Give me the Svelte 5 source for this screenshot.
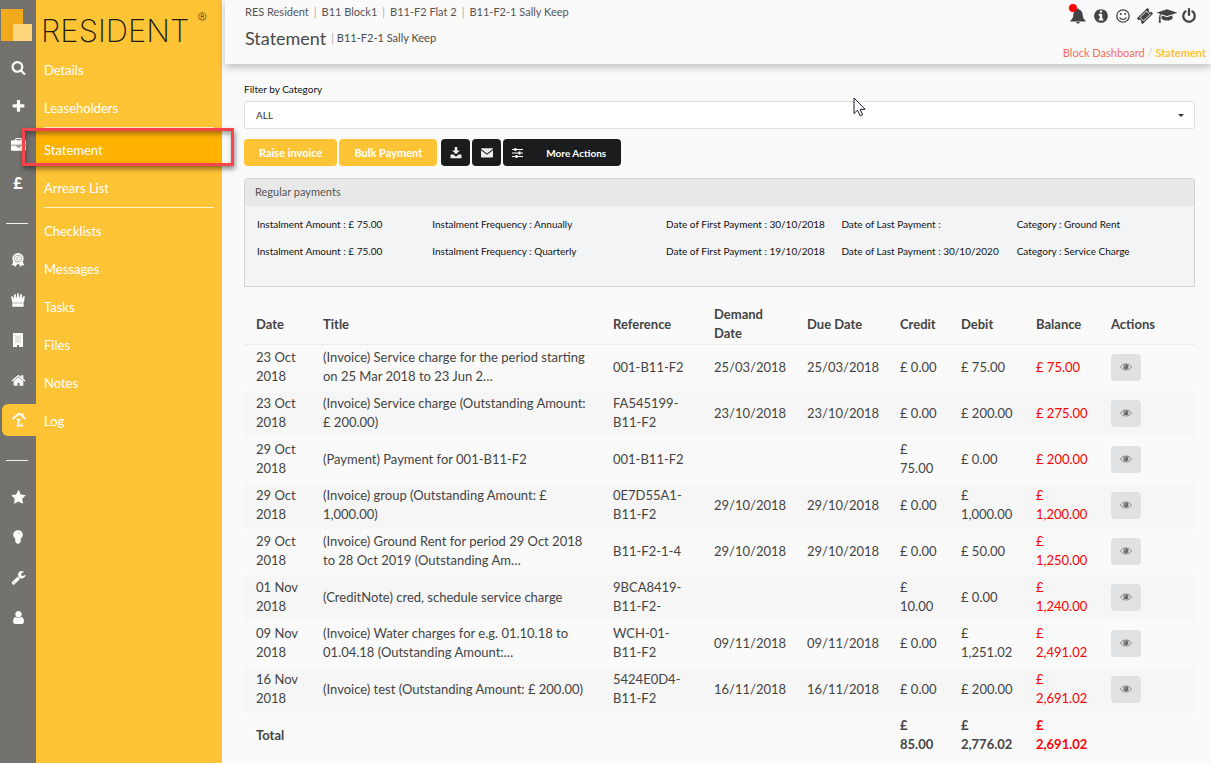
<script>
  const faSearch = 'M1216 832q0-185-131.5-316.5t-316.5-131.5-316.5 131.5-131.5 316.5 131.5 316.5 316.5 131.5 316.5-131.5 131.5-316.5zm512 832q0 52-38 90t-90 38q-54 0-90-38l-343-342q-179 124-399 124-143 0-273.5-55.5t-225-150-150-225-55.5-273.5 55.5-273.5 150-225 225-150 273.5-55.5 273.5 55.5 225 150 150 225 55.5 273.5q0 220-124 399l343 343q37 37 37 90z';
  const faPlus = 'M1600 736v192q0 40-28 68t-68 28h-416v416q0 40-28 68t-68 28h-192q-40 0-68-28t-28-68v-416h-416q-40 0-68-28t-28-68v-192q0-40 28-68t68-28h416v-416q0-40 28-68t68-28h192q40 0 68 28t28 68v416h416q40 0 68 28t28 68z';
  const faCase = 'M640 256h512v-128h-512v128zm1152 640v480q0 66-47 113t-113 47h-1472q-66 0-113-47t-47-113v-480h672v160q0 26 19 45t45 19h320q26 0 45-19t19-45v-160h672zm-768 0v128h-256v-128h256zm768-480v384h-1792v-384q0-66 47-113t113-47h352v-160q0-40 28-68t68-28h576q40 0 68 28t28 68v160h352q66 0 113 47t47 113z';
  const faHome = 'M1472 992v480q0 26-19 45t-45 19h-384v-384h-256v384h-384q-26 0-45-19t-19-45v-480q0-1 .5-3t.5-3l575-474 575 474q1 2 1 6zm223-69l-62 74q-8 9-21 11h-3q-13 0-21-7l-692-577-692 577q-12 8-24 7-13-2-21-11l-62-74q-8-10-7-23.5t11-21.5l719-599q32-26 76-26t76 26l244 204v-195q0-14 9-23t23-9h192q14 0 23 9t9 23v408l219 182q10 8 11 21.5t-7 23.5z';
  const faStar = 'M1728 647q0 22-26 48l-363 354 86 500q1 7 1 20 0 21-10.5 35.5t-30.5 14.5q-19 0-40-12l-449-236-449 236q-22 12-40 12-21 0-31.5-14.5t-10.5-35.5q0-6 2-20l86-500-364-354q-25-27-25-48 0-37 56-46l502-73 225-455q19-41 49-41t49 41l225 455 502 73q56 9 56 46z';
  const faWrench = 'M448 1472q0-26-19-45t-45-19-45 19-19 45 19 45 45 19 45-19 19-45zm644-420l-682 682q-37 37-90 37-52 0-91-37l-106-108q-38-36-38-90 0-53 38-91l681-681q39 98 114.5 173.5t173.5 114.5zm634-435q0 39-23 106-47 134-164.5 217.5t-258.5 83.5q-185 0-316.5-131.5t-131.5-316.5 131.5-316.5 316.5-131.5q58 0 121.5 16.5t107.5 46.5q16 11 16 28t-16 28l-293 169v224l193 107q5-3 79-48.5t135.5-81 70.5-35.5q15 0 23.5 10t8.5 25z';
  const faUser = 'M1536 1399q0 109-62.5 187t-150.5 78h-854q-88 0-150.5-78t-62.5-187q0-85 8.5-160.5t31.5-152 58.5-131 94-89 134.5-34.5q131 128 313 128t313-128q76 0 134.5 34.5t94 89 58.5 131 31.5 152 8.5 160.5zm-256-887q0 159-112.5 271.5t-271.5 112.5-271.5-112.5-112.5-271.5 112.5-271.5 271.5-112.5 271.5 112.5 112.5 271.5z';
  const faInfo = 'M1152 1376v-160q0-14-9-23t-23-9h-96v-512q0-14-9-23t-23-9h-320q-14 0-23 9t-9 23v160q0 14 9 23t23 9h96v320h-96q-14 0-23 9t-9 23v160q0 14 9 23t23 9h448q14 0 23-9t9-23zm-128-896v-160q0-14-9-23t-23-9h-192q-14 0-23 9t-9 23v160q0 14 9 23t23 9h192q14 0 23-9t9-23zm640 416q0 209-103 385.5t-279.5 279.5-385.5 103-385.5-103-279.5-279.5-103-385.5 103-385.5 279.5-279.5 385.5-103 385.5 103 279.5 279.5 103 385.5z';
  const faCap = 'M1774 836l18 316q4 69-82 128t-235 93.5-323 34.5-323-34.5-235-93.5-82-128l18-316 574 181q22 7 48 7t48-7zm530-324q0 23-22 31l-1120 352q-4 1-10 1t-10-1l-652-206q-43 34-71 111.5t-34 178.5q63 36 63 109 0 69-58 107l58 433q2 14-8 25-9 11-24 11h-192q-15 0-24-11-10-11-8-25l58-433q-58-38-58-107 0-73 65-111 11-207 98-330l-333-104q-22-8-22-31t22-31l1120-352q4-1 10-1t10 1l1120 352q22 8 22 31z';
  const faPower = 'M1664 896q0 156-61 298t-164 245-245 164-298 61-298-61-245-164-164-245-61-298q0-182 80.5-343t226.5-270q43-32 95.5-25t83.5 50q32 42 24.5 94.5t-49.5 84.5q-98 74-151.5 181t-53.5 228q0 104 40.5 198.5t109.5 163.5 163.5 109.5 198.5 40.5 198.5-40.5 163.5-109.5 109.5-163.5 40.5-198.5q0-121-53.5-228t-151.5-181q-42-32-49.5-84.5t24.5-94.5q31-43 84-50t95 25q146 109 226.5 270t80.5 343zm-640-768v640q0 52-38 90t-90 38-90-38-38-90v-640q0-52 38-90t90-38 90 38 38 90z';

  const menu = [
    ['Details', 'Leaseholders'],
    ['Statement', 'Arrears List'],
    ['Checklists', 'Messages', 'Tasks', 'Files', 'Notes', 'Log'],
  ];
  const active = 'Statement';

  const crumbs = ['RES Resident', 'B11 Block1', 'B11-F2 Flat 2', 'B11-F2-1 Sally Keep'];

  const payments = [
    ['Instalment Amount : £ 75.00', 'Instalment Frequency : Annually', 'Date of First Payment : 30/10/2018', 'Date of Last Payment :', 'Category : Ground Rent'],
    ['Instalment Amount : £ 75.00', 'Instalment Frequency : Quarterly', 'Date of First Payment : 19/10/2018', 'Date of Last Payment : 30/10/2020', 'Category : Service Charge'],
  ];

  const heads = ['Date', 'Title', 'Reference', 'Demand Date', 'Due Date', 'Credit', 'Debit', 'Balance', 'Actions'];
  const rows = [
    ['23 Oct 2018', '(Invoice) Service charge for the period starting on 25 Mar 2018 to 23 Jun 2…', '001-B11-F2', '25/03/2018', '25/03/2018', '£ 0.00', '£ 75.00', '£ 75.00'],
    ['23 Oct 2018', '(Invoice) Service charge (Outstanding Amount: £ 200.00)', 'FA545199-B11-F2', '23/10/2018', '23/10/2018', '£ 0.00', '£ 200.00', '£ 275.00'],
    ['29 Oct 2018', '(Payment) Payment for 001-B11-F2', '001-B11-F2', '', '', '£ 75.00', '£ 0.00', '£ 200.00'],
    ['29 Oct 2018', '(Invoice) group (Outstanding Amount: £ 1,000.00)', '0E7D55A1-B11-F2', '29/10/2018', '29/10/2018', '£ 0.00', '£ 1,000.00', '£ 1,200.00'],
    ['29 Oct 2018', '(Invoice) Ground Rent for period 29 Oct 2018 to 28 Oct 2019 (Outstanding Am…', 'B11-F2-1-4', '29/10/2018', '29/10/2018', '£ 0.00', '£ 50.00', '£ 1,250.00'],
    ['01 Nov 2018', '(CreditNote) cred, schedule service charge', '9BCA8419-B11-F2-', '', '', '£ 10.00', '£ 0.00', '£ 1,240.00'],
    ['09 Nov 2018', '(Invoice) Water charges for e.g. 01.10.18 to 01.04.18 (Outstanding Amount:…', 'WCH-01-B11-F2', '09/11/2018', '09/11/2018', '£ 0.00', '£ 1,251.02', '£ 2,491.02'],
    ['16 Nov 2018', '(Invoice) test (Outstanding Amount: £ 200.00)', '5424E0D4-B11-F2', '16/11/2018', '16/11/2018', '£ 0.00', '£ 200.00', '£ 2,691.02'],
  ];
</script>

{#snippet fa(d, size = 15)}
  <svg width={size} height={size} viewBox="0 0 1792 1792" fill="currentColor" aria-hidden="true"><path {d} /></svg>
{/snippet}

<div class="app">
  <nav class="rail" aria-label="Main">
    <svg class="mark" width="32" height="34" viewBox="0 0 32 34" aria-hidden="true">
      <rect x="1" y="1" width="22" height="32" fill="#f2aa1d" />
      <rect x="13" y="16" width="19" height="17" fill="#fdd57a" />
    </svg>
    <div class="icons top">
      <a href="#search" aria-label="Search">{@render fa(faSearch)}</a>
      <a href="#add" aria-label="Add">{@render fa(faPlus)}</a>
      <a href="#work" aria-label="Work">{@render fa(faCase)}</a>
      <a href="#money" class="pound">£</a>
    </div>
    <hr />
    <div class="icons">
      <a href="#awards" aria-label="Awards">
        <svg width="14" height="14" viewBox="0 0 14 14" fill="none" stroke="currentColor" aria-hidden="true">
          <circle cx="7" cy="5.6" r="5.6" fill="currentColor" stroke="none" />
          <circle cx="7" cy="5.6" r="3.6" stroke="#96948f" stroke-width=".8" />
          <path d="M8.500 4.700c-1-1.200-3-.7-3 .9s2 2.100 3 .9" stroke="#96948f" stroke-width=".8" />
          <path d="M2.600 8.500.6 12.300l2.500 0 1.200 1.700L6.300 10.800h1.400l2 3.200 1.200-1.700h2.500L11.400 8.500l-2.500 2H5z" fill="currentColor" stroke="none" />
        </svg>
      </a>
      <a href="#crown" aria-label="Clients">
        <svg width="14" height="14" viewBox="0 0 14 14" fill="currentColor" aria-hidden="true">
          <path d="M1.300 9.800.1 3.600 1.400 3l1.800 3L3 1.400 4.500 1l1.300 4.500L6.300.2h1.400l.5 5.300L9.500 1l1.500.4L10.800 6l1.800-3 1.300.6-1.200 6.200zM1.300 10.200h11.400v3.500H1.300z" />
        </svg>
      </a>
      <a href="#blocks" aria-label="Blocks">
        <svg width="12" height="14" viewBox="0 0 12 14" aria-hidden="true">
          <path d="M1 0h10v14H7v-2H5v2H1z" fill="currentColor" />
          <path d="M4 2.500v7.500M6 2.500v7.500M8 2.500v7.500" stroke="#c9c9c7" stroke-width="1" />
        </svg>
      </a>
      <a href="#homes" aria-label="Homes">{@render fa(faHome)}</a>
      <a href="#lease" class="current" aria-label="Leaseholds">
        <svg width="16" height="16" viewBox="0 0 16 16" aria-hidden="true" fill="none" stroke="currentColor">
          <path d="M1.500 7 8 1.500 14.500 7M11.500 1.500v3" stroke-width="2" />
          <path d="M5.500 7.500h4M7.500 7.500v6M5.500 13.800h5.500v-2.300" stroke-width="1.500" />
        </svg>
      </a>
    </div>
    <hr />
    <div class="icons">
      <a href="#favourites" aria-label="Favourites">{@render fa(faStar)}</a>
      <a href="#ideas" aria-label="Ideas">
        <svg width="12" height="14" viewBox="0 0 12 14" aria-hidden="true">
          <path d="M6 .3c2.900 0 4.800 2 4.800 4.400 0 1.700-.9 2.600-1.700 3.600-.5.700-.3 1.600-.4 2.700C8.500 13 7.500 13.700 6 13.700S3.500 13 3.300 11c-.1-1.100.1-2-.4-2.700-.8-1-1.700-1.900-1.700-3.600C1.200 2.300 3.100.3 6 .3z" fill="currentColor" />
          <path d="M6 2.500c1.200 0 2 .6 2.200 1.700" fill="none" stroke="#a9a9a6" stroke-width=".8" />
        </svg>
      </a>
      <a href="#settings" aria-label="Settings">{@render fa(faWrench)}</a>
      <a href="#account" aria-label="Account">{@render fa(faUser)}</a>
    </div>
  </nav>

  <aside class="side">
    <div class="brand">RESIDENT<span>®</span></div>
    {#each menu as group}
      <ul>
        {#each group as item}
          <li class:on={item === active}>
            <a href="#{item}">{item}</a>
            {#if item === active}<span class="marker"></span>{/if}
          </li>
        {/each}
      </ul>
    {/each}
  </aside>

  <div class="main">
    <header>
      <div>
        <p class="trail">
          {#each crumbs as c, i}{#if i}<i>|</i>{/if}<span>{c}</span>{/each}
        </p>
        <h1>Statement <small><i>|</i> B11-F2-1 Sally Keep</small></h1>
      </div>
      <div class="right">
        <div class="tools">
          <a href="#alerts" class="bell" aria-label="Alerts">
            <svg width="16" height="16" viewBox="0 0 16 16" fill="currentColor" aria-hidden="true">
              <path d="M8 .5c.7 0 1.100.5 1.100 1.200 2.200.5 3.400 2.300 3.500 4.600.2 3 .8 4.900 2.900 6.200V13.500H.5v-1c2.100-1.300 2.700-3.200 2.900-6.200.1-2.300 1.300-4.100 3.500-4.600C6.900 1 7.300.5 8 .5zM6.200 14h3.600c-.2 1-.9 1.600-1.800 1.600S6.400 15 6.200 14z" />
            </svg>
            <b></b>
          </a>
          <a href="#info" aria-label="Information">{@render fa(faInfo, 16)}</a>
          <a href="#feedback" aria-label="Feedback">
            <svg width="14" height="14" viewBox="0 0 14 14" aria-hidden="true">
              <circle cx="7" cy="7" r="6.200" fill="none" stroke="currentColor" stroke-width="1.300" />
              <circle cx="4.800" cy="5" r="1" fill="currentColor" /><circle cx="9.200" cy="5" r="1" fill="currentColor" />
              <path d="M3.600 8.400c1.200 2.700 5.600 2.700 6.800 0" fill="none" stroke="currentColor" stroke-width="1.200" />
            </svg>
          </a>
          <a href="#tickets" aria-label="Tickets">
            <svg width="16" height="16" viewBox="0 0 16 16" aria-hidden="true">
              <g transform="rotate(-45 8 8)">
                <path d="M.5 4h15v2.500a1.500 1.500 0 0 0 0 3V12H.5V9.500a1.500 1.500 0 0 0 0-3z" fill="currentColor" />
                <rect x="3.500" y="5.500" width="9" height="5" fill="none" stroke="#fafafa" stroke-width=".9" />
              </g>
            </svg>
          </a>
          <a href="#training" class="cap" aria-label="Training">
            <svg width="20" height="16" viewBox="0 0 2304 1792" fill="currentColor" aria-hidden="true"><path d={faCap} /></svg>
          </a>
          <a href="#logout" aria-label="Log out">{@render fa(faPower, 16)}</a>
        </div>
        <p class="where"><a href="#dashboard">Block Dashboard</a> <i>/</i> <b>Statement</b></p>
      </div>
    </header>

    <main>
      <label for="category">Filter by Category</label>
      <div class="pick">
        <select id="category"><option>ALL</option></select>
        <svg class="caret" width="6" height="3" viewBox="0 0 6 3" aria-hidden="true"><path d="M0 0h6L3 3z" fill="#333" /></svg>
        <svg class="pointer" width="13" height="20" viewBox="0 0 13 20" aria-hidden="true">
          <path d="M1 1v15.500l3.500-3.300 2.700 5.600 2.500-1.100-2.600-5.400h5z" fill="#fff" stroke="#1a1a2a" stroke-width="1" />
        </svg>
      </div>

      <div class="actions">
        <button class="gold">Raise invoice</button>
        <button class="gold bulk">Bulk Payment</button>
        <button class="dark icon" aria-label="Download">
          <svg width="12" height="12" viewBox="0 0 12 12" fill="currentColor" aria-hidden="true">
            <path d="M4.700 0h2.600v3.500h2.500L6 7.300 2.200 3.500h2.500zM.5 7.500h3L6 9.700l2.500-2.200h3v3.700H.5z" />
          </svg>
        </button>
        <button class="dark icon" aria-label="Email">
          <svg width="12" height="10" viewBox="0 0 12 10" fill="currentColor" aria-hidden="true">
            <path d="M.6.300h10.800c.4 0 .6.300.6.700L6 5.500 0 1C0 .6.200.300.600.300zM0 2.300l6 4.400 6-4.400v6.500c0 .5-.3.800-.8.800H.8c-.5 0-.8-.3-.8-.8z" />
          </svg>
        </button>
        <button class="dark more">
          <svg width="11" height="10" viewBox="0 0 11 10" fill="none" stroke="currentColor" aria-hidden="true">
            <path d="M0 1.500h11M0 5h11M0 8.500h11" />
            <path d="M3.500 0v3M7.500 3.500v3M4.500 7v3" stroke-width="2" />
          </svg>
          <span>More Actions</span>
        </button>
      </div>

      <section class="panel">
        <h2>Regular payments</h2>
        <div class="pay">
          {#each payments as p}
            {#each p as cell}<span>{cell}</span>{/each}
          {/each}
        </div>
      </section>

      <table>
        <colgroup>
          <col class="w-date" /><col class="w-title" /><col class="w-ref" /><col class="w-day" /><col class="w-day" />
          <col class="w-credit" /><col class="w-sum" /><col class="w-sum" /><col class="w-act" />
        </colgroup>
        <thead>
          <tr>{#each heads as h}<th scope="col">{h}</th>{/each}</tr>
        </thead>
        <tbody>
          {#each rows as r}
            <tr>
              {#each r as cell, i}<td class:red={i === 7}>{cell}</td>{/each}
              <td>
                <button class="view" aria-label="View">
                  <svg width="12" height="8" viewBox="0 0 12 8" aria-hidden="true">
                    <path d="M.5 4C3 0 9 0 11.500 4 9 8 3 8 .5 4z" fill="none" stroke="#808182" stroke-width=".9" />
                    <circle cx="6" cy="3.700" r="2.500" fill="#66686a" />
                    <circle cx="5.300" cy="3" r=".7" fill="#ccc" />
                  </svg>
                </button>
              </td>
            </tr>
          {/each}
        </tbody>
        <tfoot>
          <tr>
            <th scope="row" colspan="5">Total</th>
            <td>£ 85.00</td><td>£ 2,776.02</td><td class="red">£ 2,691.02</td><td></td>
          </tr>
        </tfoot>
      </table>
    </main>
  </div>
</div>

<style>
  :global(body) { background: #fafafa; }
  .app {
    display: flex;
    min-height: 100vh;
    font-family: Lato, "Liberation Sans", sans-serif;
    font-size: 13px;
    line-height: 19px;
    color: #444;
  }
  a { color: inherit; text-decoration: none; }
  i { font-style: normal; }
  p, h1, h2, ul { margin: 0; padding: 0; }
  svg { display: block; }

  .rail { flex: none; width: 36px; padding-top: 8px; box-sizing: border-box; background: #74726e; color: #fff; }
  .icons { display: flex; flex-direction: column; gap: 8px; padding: 20px 0 24px; }
  .icons.top { gap: 7px; padding: 9px 0 23px; }
  .icons a { display: flex; align-items: center; justify-content: center; height: 32px; }
  .icons .current { margin-left: 2px; background: #ffc436; border-radius: 6px 0 0 6px; }
  .icons .pound { font-size: 16px; line-height: 30px; font-weight: 900; align-items: flex-start; }
  hr { width: 22px; margin: 0 0 0 6px; border: 0; border-top: 1px solid #eee; }

  .side { flex: none; width: 186px; background: #ffc436; color: #fff; }
  .brand {
    display: flex;
    gap: 8px;
    height: 40px;
    padding: 11px 0 0 5px;
    font: 200 31px/40px Inter, sans-serif;
    color: #1c1a10;
  }
  .brand span { font-size: 14px; line-height: 14px; }
  ul { list-style: none; }
  ul + ul::before { content: ""; display: block; margin: 0 8px 3px; border-top: 1px solid #fff3cf; }
  ul:last-child::before { margin-bottom: 4px; }
  li { position: relative; display: flex; height: 38px; align-items: flex-start; }
  li a { flex: 1; padding: 4px 8px 0; line-height: 30px; }
  .on a { background: #ffb200; }
  .marker {
    position: absolute;
    inset: -3px -12px 3px -14px;
    border: 3px solid #f8444a;
    box-shadow: 1px 3px 5px rgb(0 0 0 / 45%), inset 1px 3px 5px rgb(0 0 0 / 35%);
    z-index: 2;
    pointer-events: none;
  }

  .main { flex: 1; min-width: 0; }
  header {
    display: flex;
    justify-content: space-between;
    height: 64px;
    margin-left: 3px;
    padding: 2px 5px 0 20px;
    box-sizing: border-box;
    background: #fafafa;
    box-shadow: 0 3px 8px rgb(0 0 0 / 25%);
  }
  .trail { display: flex; gap: 5px; font-size: 11px; color: #555; }
  .trail i, small i { color: #aaa; }
  h1 { display: flex; align-items: center; gap: 5px; margin-top: 5px; font-size: 18px; line-height: 24px; font-weight: 400; color: #4a4a4a; }
  small { font-size: 11px; }
  .right { display: flex; flex-direction: column; align-items: flex-end; gap: 14px; }
  .tools { display: flex; align-items: center; gap: 7px; height: 27px; padding-right: 9px; color: #444; }
  .cap { margin: 0 -3px; }
  .bell { position: relative; }
  .bell b { position: absolute; left: -1px; top: -4px; width: 8px; height: 8px; border-radius: 50%; background: #f00; }
  .where { font-size: 11px; line-height: 19px; color: #f96a5c; }
  .where i { color: #ccc; }
  .where b { color: #ffc436; }

  main { padding: 16px 16px 4px 22px; }
  label { display: block; font-size: 10px; color: #111; }
  .pick { position: relative; margin-top: 2px; }
  select {
    display: block;
    width: 100%;
    height: 28px;
    padding: 0 11px;
    appearance: none;
    border: 1px solid #dedede;
    border-radius: 3px;
    background: #fff;
    font: 10px Lato, sans-serif;
    color: #333;
  }
  .caret { position: absolute; right: 11px; top: 13px; }
  .pointer { position: absolute; left: 64%; top: -4px; }

  .actions { display: flex; gap: 2px; margin-top: 10px; }
  button { border: 0; padding: 0; border-radius: 4px; font-family: inherit; }
  .gold { height: 27px; padding: 0 15px; background: #ffc436; color: #fff; font-size: 11px; font-weight: 700; }
  .bulk { margin-right: 2px; }
  .dark { display: flex; align-items: center; justify-content: center; height: 27px; background: #1b1c1d; color: #eee; }
  .icon { width: 29px; }
  .more { gap: 23px; padding: 0 15px 0 9px; color: #fff; font-size: 10px; font-weight: 700; }

  .panel { margin-top: 12px; border: 1px solid #d4d4d5; border-radius: 3px 3px 0 0; background: #f3f4f6; }
  h2 { padding: 3px 10px 5px; background: #e8e8e8; font-size: 11px; line-height: 19px; font-weight: 400; color: #555; }
  .pay {
    display: grid;
    grid-template-columns: 3fr 4fr 3fr 3fr 3fr;
    row-gap: 8px;
    padding: 9px 2px 25px 12px;
    font-size: 10px;
    color: #111;
  }

  table { width: 100%; margin-top: 12px; border-collapse: collapse; table-layout: fixed; }
  th, td { padding: 3px 8px 5px 12px; text-align: left; vertical-align: middle; }
  th { font-weight: 700; }
  thead th { padding: 6px 8px 1px 12px; border-bottom: 1px solid #ececec; }
  tbody tr:nth-child(even) { background: #f6f6f6; }
  tfoot td { font-weight: 700; }
  .red { color: #f00; }
  .w-date { width: 67px; }
  .w-ref { width: 101px; }
  .w-day { width: 93px; }
  .w-credit { width: 61px; }
  .w-sum { width: 75px; }
  .w-act { width: 96px; }
  .view { display: flex; align-items: center; justify-content: center; width: 30px; height: 27px; background: #e0e1e2; }
</style>
